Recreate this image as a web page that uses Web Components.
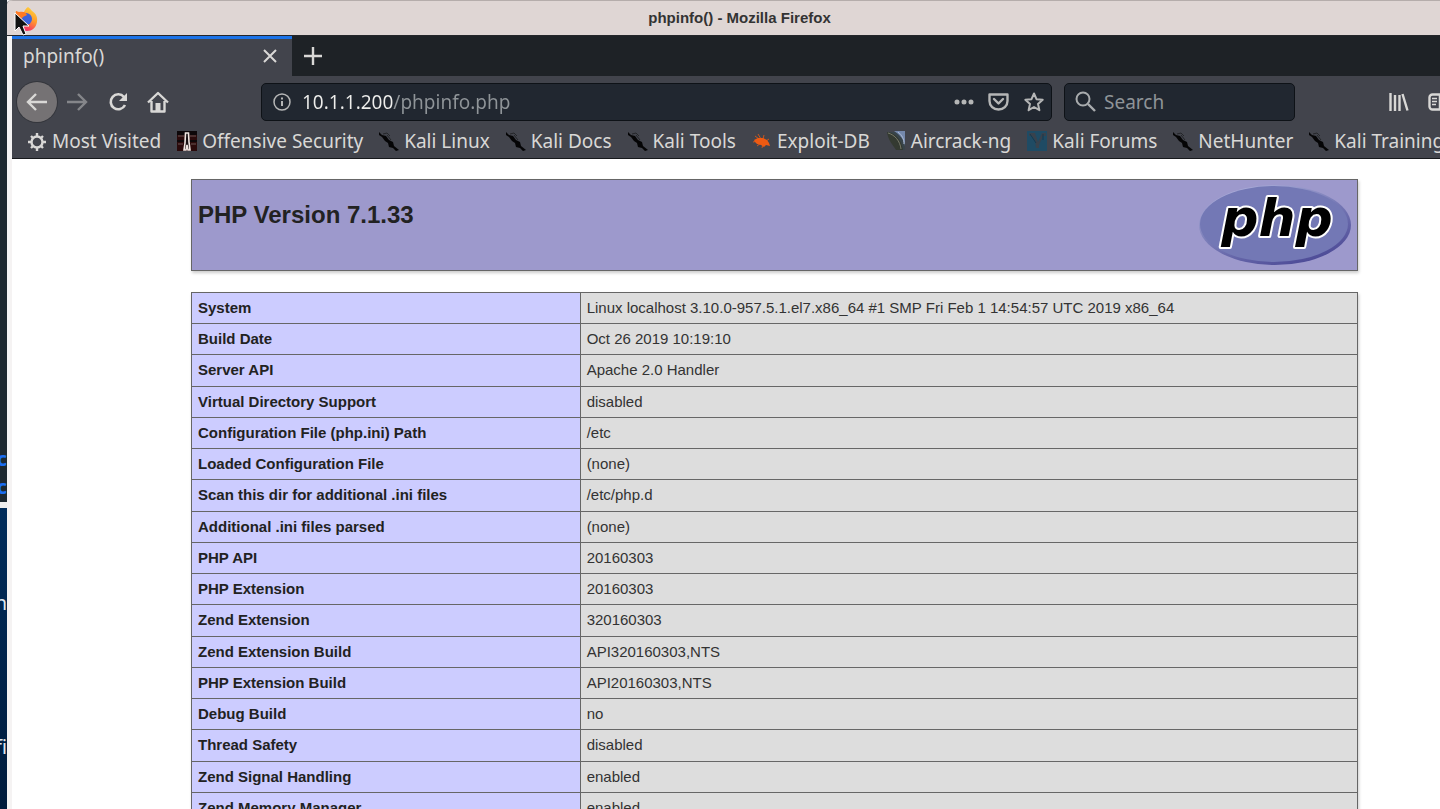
<!DOCTYPE html>
<html lang="en">
<head>
<meta charset="utf-8">
<title>phpinfo()</title>
<style>
    html, body {
        height: 100%;
        margin: 0;
        overflow: hidden;
    }

    body {
        display: flex;
        background: #fff;
        --ui: "Noto Sans", "Open Sans", sans-serif;
        --page: "Liberation Sans", Arial, sans-serif;
    }
</style>
</head>
<body>
    <rwc-desktop></rwc-desktop>

    <rwc-window caption="phpinfo() - Mozilla Firefox">
        <rwc-tabs slot="chrome" label="phpinfo()"></rwc-tabs>
        <rwc-toolbar slot="chrome" url="10.1.1.200/phpinfo.php"></rwc-toolbar>
        <rwc-bookmarks slot="chrome">
            <rwc-bookmark icon="gear">Most Visited</rwc-bookmark>
            <rwc-bookmark icon="offsec">Offensive Security</rwc-bookmark>
            <rwc-bookmark icon="kali">Kali Linux</rwc-bookmark>
            <rwc-bookmark icon="kali">Kali Docs</rwc-bookmark>
            <rwc-bookmark icon="kali">Kali Tools</rwc-bookmark>
            <rwc-bookmark icon="exploit">Exploit-DB</rwc-bookmark>
            <rwc-bookmark icon="aircrack">Aircrack-ng</rwc-bookmark>
            <rwc-bookmark icon="forums">Kali Forums</rwc-bookmark>
            <rwc-bookmark icon="kali">NetHunter</rwc-bookmark>
            <rwc-bookmark icon="kali">Kali Training</rwc-bookmark>
        </rwc-bookmarks>

        <rwc-phpinfo version="7.1.33"></rwc-phpinfo>
    </rwc-window>

<script>
// Shared base: open shadow root filled from the template of each class
class RWC_Element extends HTMLElement {
    constructor() {
        super()
        this.attachShadow({mode: 'open'})
    }

    connectedCallback() {
        const template = document.createElement('template')
        template.innerHTML = this.getTemplate()
        this.shadowRoot.replaceChildren(template.content.cloneNode(true))
    }
}

// What is left of the desktop and the terminal behind the browser
class RWC_Desktop extends RWC_Element {
    getTemplate() {
        return `
            <style>
                :host {
                    position: relative;
                    flex: none;
                    width: 7px;
                    overflow: hidden;
                    background: linear-gradient(#02142c, #003063 30%, #002b59 65%, #001b3c);
                    font: 20px/28px var(--ui);
                    color: #dfe6ee;
                }

                .terminal {
                    height: 502px;
                    background: #1d2830;
                    border-bottom: 6px solid #eee;
                }

                span {
                    position: absolute;
                    right: 0;
                }

                .link {
                    color: #1b6df0;
                    font-weight: bold;
                }
            </style>
            <div class="terminal"></div>
            <span class="link" style="top: 445px">c</span>
            <span class="link" style="top: 473px">c</span>
            <span style="top: 589px">n</span>
            <span style="top: 733px">fi</span>
        `
    }
}

class RWC_Window extends RWC_Element {
    getTemplate() {
        return `
            <style>
                :host {
                    display: flex;
                    flex-direction: column;
                    flex: 1;
                    min-width: 0;
                    overflow: hidden;
                    background: #f5f3f3;
                    border-top-left-radius: 6px;
                    box-shadow: -1px 0 1px #777;
                }

                header {
                    position: relative;
                    display: flex;
                    align-items: center;
                    flex: none;
                    height: 35px;
                    padding-left: 8px;
                    background: #dfd6d4;
                    border-bottom: 1px solid #24262a;
                    box-shadow: inset 0 1px #b5adab;
                }

                h1 {
                    flex: 1;
                    margin: 0;
                    font: bold 15px/20px var(--page);
                    color: #333;
                    text-align: center;
                }

                .logo {
                    width: 24px;
                    height: 26px;
                    margin-top: 3px;
                }

                .pointer {
                    position: absolute;
                    left: 7px;
                    top: 12px;
                    width: 16px;
                    height: 25px;
                    z-index: 1;
                }

                .body {
                    display: flex;
                    flex-direction: column;
                    flex: 1;
                    min-height: 0;
                    margin-left: 5px;
                    background: #fff;
                }
            </style>
            <header>
                <svg class="logo" viewBox="0 0 24 26">
                    <defs>
                        <linearGradient id="fire" x1=".8" y1="0" x2=".3" y2="1">
                            <stop offset="0" stop-color="#ffd63d"/>
                            <stop offset=".45" stop-color="#ff9a2c"/>
                            <stop offset=".8" stop-color="#f8435a"/>
                            <stop offset="1" stop-color="#e32a7a"/>
                        </linearGradient>
                    </defs>
                    <path fill="url(#fire)" d="M13 1c2 1 3 3 4 4 3 2 6 5 5 11-1 6-5 9-10 9S1 22 0 16c0-4 0-7 1-11l2 2c2-1 4-1 6-1 1-2 2-4 4-5z"/>
                    <circle cx="11" cy="13" r="6" fill="#3c63dc"/>
                    <path fill="#ff7a24" d="M1 5l3 1c4-1 7 0 8 3-1 1-3 1-4 2s-1 2-2 3c-3 0-5-3-5-9z"/>
                </svg>
                <svg class="pointer" viewBox="0 0 16 25">
                    <path d="M1 1v18l4-4 4 8 3-1-3-8h6z" fill="#111" stroke="#fff"/>
                </svg>
                <h1>${this.getAttribute('caption')}</h1>
            </header>
            <div class="body">
                <slot name="chrome"></slot>
                <slot></slot>
            </div>
        `
    }
}

class RWC_Tabs extends RWC_Element {
    getTemplate() {
        return `
            <style>
                :host {
                    display: flex;
                    flex: none;
                    height: 40px;
                    background: #1e2226;
                }

                .tab {
                    display: flex;
                    align-items: center;
                    justify-content: space-between;
                    box-sizing: border-box;
                    width: 280px;
                    padding: 0 14px 4px 11px;
                    background: #42444c;
                    border-top: 3px solid #1b73e8;
                    font: 19px/26px var(--ui);
                    color: #d9d8d6;
                }

                button {
                    display: flex;
                    padding: 0;
                    background: none;
                    border: 0;
                    color: #d9d8d6;
                }

                .add {
                    align-items: center;
                    padding: 0 12px;
                }

                svg {
                    fill: none;
                    stroke: currentColor;
                    stroke-width: 2;
                }
            </style>
            <div class="tab">
                <span>${this.getAttribute('label')}</span>
                <button type="button" title="Close tab">
                    <svg width="16" height="16" viewBox="0 0 16 16"><path d="M2 2l12 12M14 2L2 14"/></svg>
                </button>
            </div>
            <button class="add" type="button" title="New tab">
                <svg width="18" height="18" viewBox="0 0 18 18"><path d="M9 0v18M0 9h18" stroke-width="2.4"/></svg>
            </button>
        `
    }
}

class RWC_Toolbar extends RWC_Element {
    getTemplate() {
        return `
            <style>
                :host {
                    display: flex;
                    align-items: center;
                    flex: none;
                    height: 51px;
                    padding-left: 5px;
                    background: #42444c;
                    color: #d9d8d6;
                }

                button {
                    display: flex;
                    align-items: center;
                    justify-content: center;
                    flex: none;
                    width: 40px;
                    height: 40px;
                    padding: 0;
                    background: none;
                    border: 0;
                    color: inherit;
                }

                .back {
                    background: #757274;
                    border-radius: 50%;
                    box-shadow: 0 0 0 1px #34363c;
                }

                .forward {
                    margin-right: 1px;
                    color: #85868a;
                }

                .field {
                    display: flex;
                    align-items: center;
                    box-sizing: border-box;
                    height: 38px;
                    background: #212730;
                    border: 1px solid #0e1217;
                    border-radius: 5px;
                    color: #a9acae;
                }

                .url {
                    flex: 1;
                    gap: 11px;
                    margin-left: 83px;
                    padding-left: 11px;
                    color: #b5b6b6;
                }

                .url button {
                    width: 35px;
                    height: 36px;
                }

                .search {
                    width: 231px;
                    gap: 8px;
                    margin-left: 12px;
                    padding: 0 10px;
                }

                .actions {
                    display: flex;
                }

                input {
                    flex: 1;
                    min-width: 0;
                    padding: 0;
                    background: none;
                    border: 0;
                    outline: 0;
                    font: 19px/26px var(--ui);
                    color: #8f9498;
                }

                input::placeholder {
                    color: #8f9498;
                }

                /* host name is brighter than the path */
                .url input {
                    background: linear-gradient(90deg, #eeeeec 91px, #8f9498 91px);
                    -webkit-background-clip: text;
                    background-clip: text;
                    -webkit-text-fill-color: transparent;
                }

                .end {
                    display: flex;
                    flex: none;
                    width: 145px;
                    box-sizing: border-box;
                    padding-left: 84px;
                    overflow: hidden;
                }

                svg {
                    flex: none;
                    fill: none;
                    stroke: currentColor;
                    stroke-width: 2.4;
                }
            </style>
            <button class="back" type="button" title="Back">
                <svg width="22" height="20" viewBox="0 0 22 20"><path d="M21 10H2M10 2l-8 8 8 8"/></svg>
            </button>
            <button class="forward" type="button" title="Forward">
                <svg width="22" height="20" viewBox="0 0 22 20"><path d="M1 10h19M12 2l8 8-8 8"/></svg>
            </button>
            <button type="button" title="Reload">
                <svg width="20" height="20" viewBox="0 0 20 20"><path d="M16 5a7.500 7.500 0 1 0 1 8" stroke-width="2.600"/><path d="M19 1v8h-8z" fill="currentColor" stroke="none"/></svg>
            </button>
            <button type="button" title="Home">
                <svg width="22" height="22" viewBox="0 0 22 22"><path d="M1 11.500L11 2l10 9.500M4.500 10v10.500h13V10" stroke-linejoin="round"/><path d="M8.500 20v-8h5v8z" fill="currentColor" stroke="none"/></svg>
            </button>

            <div class="field url">
                <svg width="18" height="18" viewBox="0 0 18 18" stroke="#8f9498"><circle cx="9" cy="9" r="8" stroke-width="1.500"/><path d="M9 8v5M9 4.500v2" stroke-width="2"/></svg>
                <input type="text" aria-label="Address" value="${this.getAttribute('url')}">
                <div class="actions">
                    <button type="button" title="Page actions">
                        <svg width="20" height="6" viewBox="0 0 20 6"><path fill="currentColor" stroke="none" d="M3 .5a2.500 2.500 0 1 1 0 5 2.500 2.500 0 0 1 0-5zM10 .5a2.500 2.500 0 1 1 0 5 2.500 2.500 0 0 1 0-5zM17 .5a2.500 2.500 0 1 1 0 5 2.500 2.500 0 0 1 0-5z"/></svg>
                    </button>
                    <button type="button" title="Save to Pocket">
                        <svg width="21" height="18" viewBox="0 0 21 18"><path d="M1.500 1.500h18V8c0 5-4 8.500-9 8.500S1.500 13 1.500 8zM6 6l4.500 4.500L15 6" stroke-linejoin="round" stroke-linecap="round"/></svg>
                    </button>
                    <button type="button" title="Bookmark this page">
                        <svg width="20" height="20" viewBox="0 0 20 20"><path d="M10 1.500l2.500 5.700 6.200.6-4.700 4.100 1.400 6.300L10 15l-5.400 3.200L6 11.900 1.300 7.800l6.200-.6z" stroke-linejoin="round" stroke-width="2"/></svg>
                    </button>
                </div>
            </div>

            <div class="field search">
                <svg width="21" height="21" viewBox="0 0 21 21"><circle cx="8" cy="8" r="6.500" stroke-width="2"/><path d="M13 13l7 7" /></svg>
                <input type="text" aria-label="Search" placeholder="Search">
            </div>

            <div class="end">
                <button type="button" title="Library">
                    <svg width="20" height="18" viewBox="0 0 20 18"><path d="M1.500 0v18M6 2v16M10.500 2v16M13.500 1l5 16.500"/></svg>
                </button>
                <button type="button" title="Sidebars">
                    <svg width="22" height="18" viewBox="0 0 22 18"><rect x="1.500" y="1.500" width="19" height="15" rx="3"/><path d="M11.500 2v14M4 5.500h5M4 8.500h5M4 11.500h4" stroke-width="1.500"/></svg>
                </button>
            </div>
        `
    }
}

class RWC_Bookmarks extends RWC_Element {
    getTemplate() {
        return `
            <style>
                :host {
                    display: flex;
                    align-items: center;
                    box-sizing: border-box;
                    flex: none;
                    gap: 16px;
                    height: 32px;
                    padding: 0 0 4px 15px;
                    overflow: hidden;
                    background: #42444c;
                    border-bottom: 1px solid #17191c;
                }
            </style>
            <slot></slot>
        `
    }
}

class RWC_Bookmark extends RWC_Element {
    static icons = {
        gear: `<g fill="none" stroke="#d9d8d6" stroke-width="2.400"><circle cx="10" cy="11" r="5.500"/><path d="M10 2v4M10 16v4M1 11h4M15 11h4M4 5l2.500 2.500M13.500 14.500L16 17M16 5l-2.500 2.500M6.500 14.500L4 17"/></g>`,
        offsec: `<path fill="#2a0a0b" d="M0 0h20v20H0z"/><path fill="#0d0709" d="M0 0h20v4H0zM0 9h8v2H0zM12 9h8v2h-8z"/><path stroke="#6a5554" d="M1 5h6M13 5h6M1 13h5M14 13h5"/><path fill="#171012" stroke="#eee5e1" stroke-width="1.600" d="M8.500 2h3l.5 9 1 8h-2l-1-5-1 5H7l1-7z"/>`,
        kali: `<path fill="#050506" d="M0 1l3 3 4 1 3 4 4 2 1 4 5 4-3 1-3-3-4-1-1-4-3-2-3-4-3-2z"/><path fill="none" stroke="#1c1d20" stroke-width=".8" d="M4 3l4-1 3 3M8 4l4 5"/>`,
        exploit: `<path fill="#ee5a12" d="M2 9l4-2 5 0 4 2 2 3 1 3-4-1-2 2-3-2-4-1-2-2z"/><path stroke="#ee5a12" stroke-width=".8" d="M3 5l4 3M6 3l3 5M12 4l-1 4M1 11l5-1M5 15l4-3M17 8l-3 2M10 17l1-4"/>`,
        aircrack: `<path fill="#38444a" d="M1 1h18v18H13z"/><path fill="#7488ac" d="M8 0h11v15c-1-7-5-11-11-15z"/><path fill="none" stroke="#aebcd4" d="M12 1c4 3 6 7 6 12"/><path fill="#343a31" d="M1 1c8 1 14 6 16 18h-7C7 14 2 9 1 1z"/><path fill="none" stroke="#77796a" d="M2 2c7 2 12 8 13 16"/>`,
        forums: `<path fill="#1f4b64" d="M0 0h20v20H0z"/><path fill="#38424d" d="M2 2h6l3 9 4-9h4v3h-3l-4 9v3H9l-1-8-3-4H2z"/><path stroke="#16394e" d="M3 3l6 9M16 3v6"/>`
    }

    getTemplate() {
        return `
            <style>
                :host {
                    flex: none;
                }

                a {
                    display: flex;
                    align-items: center;
                    gap: 5px;
                    font: 19px/26px var(--ui);
                    color: #d9d8d6;
                    text-decoration: none;
                    white-space: nowrap;
                }
            </style>
            <a href="#">
                <svg width="20" height="20" viewBox="0 0 20 20">${RWC_Bookmark.icons[this.getAttribute('icon')]}</svg>
                <slot></slot>
            </a>
        `
    }
}

class RWC_PhpInfo extends RWC_Element {
    static rows = [
        ['System', 'Linux localhost 3.10.0-957.5.1.el7.x86_64 #1 SMP Fri Feb 1 14:54:57 UTC 2019 x86_64'],
        ['Build Date', 'Oct 26 2019 10:19:10'],
        ['Server API', 'Apache 2.0 Handler'],
        ['Virtual Directory Support', 'disabled'],
        ['Configuration File (php.ini) Path', '/etc'],
        ['Loaded Configuration File', '(none)'],
        ['Scan this dir for additional .ini files', '/etc/php.d'],
        ['Additional .ini files parsed', '(none)'],
        ['PHP API', '20160303'],
        ['PHP Extension', '20160303'],
        ['Zend Extension', '320160303'],
        ['Zend Extension Build', 'API320160303,NTS'],
        ['PHP Extension Build', 'API20160303,NTS'],
        ['Debug Build', 'no'],
        ['Thread Safety', 'disabled'],
        ['Zend Signal Handling', 'enabled'],
        ['Zend Memory Manager', 'enabled']
    ]

    getTemplate() {
        const rows = RWC_PhpInfo.rows
            .map(([name, value]) => `<tr><th scope="row">${name}</th><td>${value}</td></tr>`)
            .join('')

        return `
            <style>
                :host {
                    display: block;
                    flex: 1;
                    min-height: 0;
                    padding: 20px 82px 0 179px;
                    overflow: hidden;
                    font: 15px/20px var(--page);
                    color: #222;
                }

                .head {
                    display: flex;
                    justify-content: space-between;
                    align-items: flex-start;
                    margin-bottom: 21px;
                    padding: 5px 6px;
                    background: #9d99cc;
                    border: 1px solid #666;
                    box-shadow: 1px 2px 3px #ccc;
                }

                h2 {
                    margin: 15px 0 0;
                    font: bold 24px/30px var(--page);
                }

                table {
                    width: 100%;
                    table-layout: fixed;
                    border-collapse: collapse;
                    box-shadow: 1px 2px 3px #ccc;
                }

                th, td {
                    padding: 5px 6px;
                    border: 1px solid #666;
                    text-align: left;
                    vertical-align: baseline;
                }

                th {
                    width: 33.33%;
                    box-sizing: border-box;
                    background: #ccf;
                }

                td {
                    background: #ddd;
                    color: #333;
                }

                tr:nth-child(4n + 3) {
                    height: 32px;
                }

                text {
                    font: italic bold 52px "DejaVu Sans", sans-serif;
                    text-anchor: middle;
                }
            </style>
            <div class="head">
                <h2>PHP Version ${this.getAttribute('version')}</h2>
                <svg width="152" height="80" viewBox="0 0 152 80">
                    <defs>
                        <linearGradient id="rim" x1=".2" y1="0" x2=".8" y2="1">
                            <stop offset="0" stop-color="#b0b2dc"/>
                            <stop offset=".45" stop-color="#7a7db8"/>
                            <stop offset="1" stop-color="#484593"/>
                        </linearGradient>
                    </defs>
                    <ellipse cx="76" cy="40" rx="76" ry="40" fill="url(#rim)"/>
                    <ellipse cx="75" cy="39" rx="74" ry="38" fill="#7378b5"/>
                    <text x="78" y="51" fill="#000" stroke="#fff" stroke-width="4" stroke-linejoin="round" paint-order="stroke">php</text>
                </svg>
            </div>
            <table>
                <tbody>${rows}</tbody>
            </table>
        `
    }
}

window.customElements.define('rwc-desktop', RWC_Desktop)
window.customElements.define('rwc-window', RWC_Window)
window.customElements.define('rwc-tabs', RWC_Tabs)
window.customElements.define('rwc-toolbar', RWC_Toolbar)
window.customElements.define('rwc-bookmarks', RWC_Bookmarks)
window.customElements.define('rwc-bookmark', RWC_Bookmark)
window.customElements.define('rwc-phpinfo', RWC_PhpInfo)
</script>
</body>
</html>
